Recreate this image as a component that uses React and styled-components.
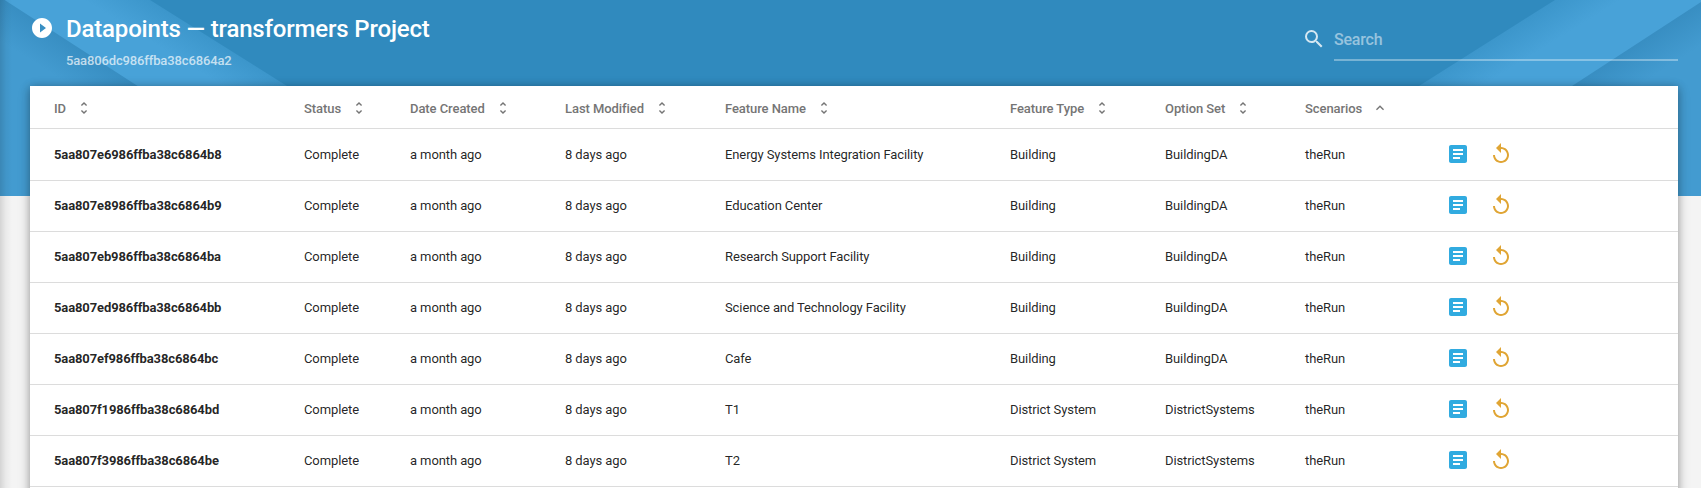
import React from "react";
import styled, { createGlobalStyle } from "styled-components";
import { MdPlayCircleFilled, MdSearch, MdUnfoldMore, MdExpandLess, MdArticle, MdReplay } from "react-icons/md";

const GlobalStyle = createGlobalStyle`
  *, *::before, *::after { box-sizing: border-box; }
  body {
    margin: 0;
    overflow: hidden;
    background: #f4f4f4;
    font-family: Roboto, "Liberation Sans", sans-serif;
    color: rgba(0, 0, 0, 0.87);
  }
  svg { display: block; flex: none; }
`;

const Page = styled.div`
  position: relative;
  height: 488px;
  overflow: hidden;
  padding: 0 23px 0 30px;
`;

const Backdrop = styled.svg`
  position: absolute;
  top: 0;
  left: 0;
  width: 1701px;
  height: 196px;
`;

const EdgeShadow = styled.div`
  position: absolute;
  top: 0;
  bottom: 0;
  left: 0;
  width: 12px;
  background: linear-gradient(to right, rgba(0, 0, 0, 0.13), rgba(0, 0, 0, 0.04) 50%, transparent);
`;

const Header = styled.header`
  position: relative;
  display: flex;
  justify-content: space-between;
  height: 86px;
`;

const Heading = styled.div`
  display: flex;
  gap: 12px;
  padding-top: 16px;
  color: #fff;
`;

const Title = styled.h1`
  margin: -3px 0 0;
  font-size: 24px;
  line-height: 32px;
  font-weight: 500;
  letter-spacing: -0.17px;
  white-space: nowrap;
`;

const ProjectId = styled.div`
  margin-top: 8px;
  font-size: 13px;
  line-height: 16px;
  font-weight: 500;
  letter-spacing: -0.14px;
  color: rgba(255, 255, 255, 0.7);
`;

const SearchBox = styled.label`
  display: flex;
  gap: 8px;
  padding-top: 27px;
  color: rgba(255, 255, 255, 0.8);
`;

const SearchInput = styled.input`
  width: 344px;
  height: 34px;
  padding: 1px 0 8px;
  border: 0;
  border-bottom: 2px solid rgba(255, 255, 255, 0.35);
  background: none;
  font: 500 16px/24px Roboto, sans-serif;
  letter-spacing: -0.22px;
  color: #fff;
  &::placeholder { color: rgba(255, 255, 255, 0.5); opacity: 1; }
`;

const Card = styled.main`
  position: relative;
  height: 420px;
  background: #fff;
  box-shadow: 0 1px 8px rgba(0, 0, 0, 0.26), 0 3px 12px rgba(0, 0, 0, 0.18);
`;

const Row = styled.div`
  display: grid;
  grid-template-columns: 250px 106px 155px 160px 285px 155px 140px 141px 43px 1fr;
  align-items: center;
  height: 51px;
  padding: 0 0 2px 24px;
  border-bottom: 1px solid #dcdcdc;
  font-size: 13px;
  letter-spacing: -0.1px;
`;

const HeadRow = styled(Row)`
  height: 43px;
  padding-bottom: 0;
  margin-bottom: 1px;
  font-weight: 500;
  letter-spacing: -0.07px;
  color: #757575;
`;

const HeadCell = styled.div`
  display: flex;
  align-items: center;
  gap: 10px;
  padding-top: 2px;
  white-space: nowrap;
`;

const Cell = styled.div`
  padding-top: 1px;
  font-weight: ${(p) => (p.$strong ? 700 : 400)};
  letter-spacing: ${(p) => (p.$strong ? "-0.12px" : "inherit")};
  white-space: nowrap;
`;

const Action = styled.button`
  padding: 0;
  border: 0;
  background: none;
  color: ${(p) => p.$color};
`;

const columns = ["ID", "Status", "Date Created", "Last Modified", "Feature Name", "Feature Type", "Option Set", "Scenarios"];

const rows = [
  ["5aa807e6986ffba38c6864b8", "Energy Systems Integration Facility", "Building", "BuildingDA"],
  ["5aa807e8986ffba38c6864b9", "Education Center", "Building", "BuildingDA"],
  ["5aa807eb986ffba38c6864ba", "Research Support Facility", "Building", "BuildingDA"],
  ["5aa807ed986ffba38c6864bb", "Science and Technology Facility", "Building", "BuildingDA"],
  ["5aa807ef986ffba38c6864bc", "Cafe", "Building", "BuildingDA"],
  ["5aa807f1986ffba38c6864bd", "T1", "District System", "DistrictSystems"],
  ["5aa807f3986ffba38c6864be", "T2", "District System", "DistrictSystems"],
];

function Shade({ id, from, to, line }) {
  return (
    <linearGradient id={id} gradientUnits="userSpaceOnUse" x1={line[0]} y1={line[1]} x2={line[2]} y2={line[3]}>
      <stop offset="0" stopColor={from} />
      <stop offset="1" stopColor={to} />
    </linearGradient>
  );
}

function Stripes() {
  return (
    <Backdrop viewBox="0 0 1701 196" aria-hidden="true">
      <defs>
        <Shade id="bandLeft" from="#3c96cb" to="#48a2d8" line={[218, 43, 200, 72]} />
        <Shade id="bandRight" from="#3c96cb" to="#48a2d8" line={[1487, 43, 1505, 72]} />
        <Shade id="foldLeft" from="#388ec2" to="#439bd0" line={[72, 43, 52, 74]} />
        <Shade id="foldRight" from="#388ec2" to="#439bd0" line={[1637, 43, 1657, 74]} />
      </defs>
      <rect width="1701" height="196" fill="#308abe" />
      <path d="M0 0H150L462 196H0Z" fill="url(#bandLeft)" />
      <path d="M0 -3L308 196H0Z" fill="url(#foldLeft)" />
      <path d="M1701 0H1555L1245 196H1701Z" fill="url(#bandRight)" />
      <path d="M1701 2L1403 196H1701Z" fill="url(#foldRight)" />
    </Backdrop>
  );
}

export default function App() {
  return (
    <Page>
      <GlobalStyle />
      <Stripes />
      <EdgeShadow />
      <Header>
        <Heading>
          <MdPlayCircleFilled size={24} />
          <div>
            <Title>Datapoints — transformers Project</Title>
            <ProjectId>5aa806dc986ffba38c6864a2</ProjectId>
          </div>
        </Heading>
        <SearchBox>
          <MdSearch size={24} />
          <SearchInput placeholder="Search" />
        </SearchBox>
      </Header>
      <Card>
        <HeadRow>
          {columns.map((name) => (
            <HeadCell key={name}>
              {name}
              {name === "Scenarios" ? <MdExpandLess size={16} /> : <MdUnfoldMore size={16} />}
            </HeadCell>
          ))}
        </HeadRow>
        {rows.map(([id, feature, type, optionSet]) => (
          <Row key={id}>
            <Cell $strong>{id}</Cell>
            <Cell>Complete</Cell>
            <Cell>a month ago</Cell>
            <Cell>8 days ago</Cell>
            <Cell>{feature}</Cell>
            <Cell>{type}</Cell>
            <Cell>{optionSet}</Cell>
            <Cell>theRun</Cell>
            <Action $color="#31abe0" aria-label="Report"><MdArticle size={24} /></Action>
            <Action $color="#e0a534" aria-label="Rerun"><MdReplay size={24} /></Action>
          </Row>
        ))}
      </Card>
    </Page>
  );
}
